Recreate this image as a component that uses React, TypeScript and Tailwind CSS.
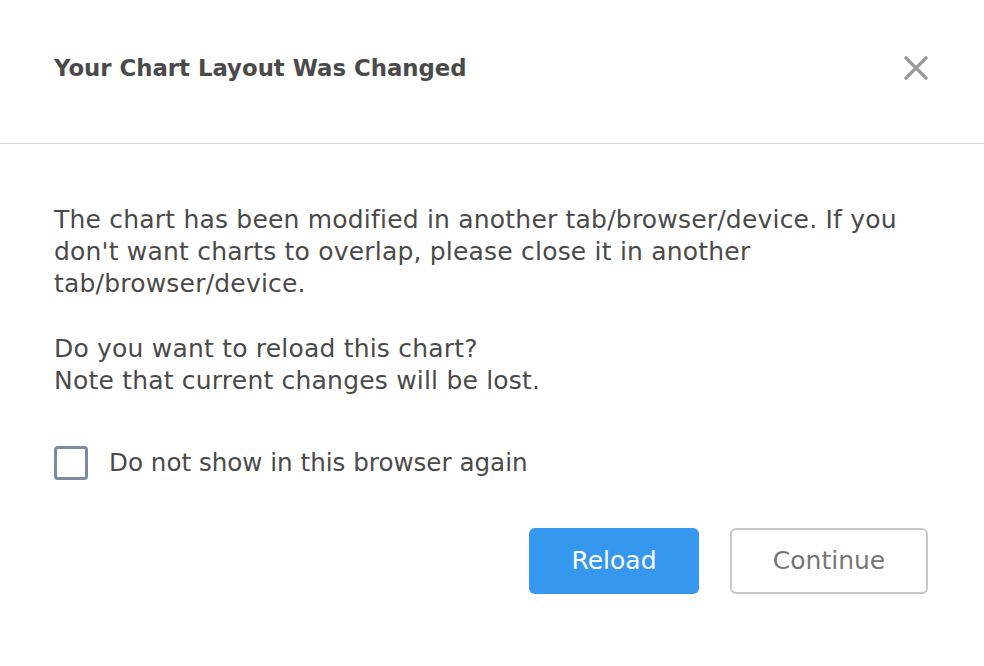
export default function App() {
    return (
        <div className="w-[984px] h-[666px] bg-white text-[#4a4a4a] flex flex-col" style={{ fontFamily: '"DejaVu Sans", sans-serif' }}>
            {/* Header */}
            <div className="h-[144px] flex items-start justify-between pl-[54px] pr-[55px] pt-[50px] border-b border-[#d6d9de] shrink-0">
                <h1 className="text-[22.8px] leading-[36px] font-bold">Your Chart Layout Was Changed</h1>
                <button className="text-[#9b9b9b] mt-[5px]">
                    <svg width="26" height="26" viewBox="0 0 26 26" fill="none" stroke="currentColor" strokeWidth="3.4" strokeLinecap="round">
                        <path d="M3 3L23 23M23 3L3 23" />
                    </svg>
                </button>
            </div>

            {/* Body */}
            <div className="flex flex-col px-[54px] pt-[60px] text-[25px] leading-[32px] tracking-[0.2px]">
                <p>
                    The chart has been modified in another tab/browser/device. If you<br />
                    don't want charts to overlap, please close it in another<br />
                    tab/browser/device.
                </p>
                <p className="mt-[33px]">
                    Do you want to reload this chart?<br />
                    Note that current changes will be lost.
                </p>

                <label className="mt-[49px] flex items-center gap-[21px]">
                    <span className="w-[34px] h-[34px] border-[3px] border-[#7b8ba0] rounded-[4px] shrink-0" />
                    <span className="text-[24.6px] tracking-normal">Do not show in this browser again</span>
                </label>

                <div className="mt-[48px] flex justify-end gap-[31px] pr-[2px]">
                    <button className="w-[170px] h-[66px] rounded-[6px] bg-[#3598ee] text-white text-[25px] tracking-normal">Reload</button>
                    <button className="w-[198px] h-[66px] rounded-[6px] border-2 border-[#c8c8c8] text-[#767676] text-[25px] tracking-normal">Continue</button>
                </div>
            </div>
        </div>
    );
}
